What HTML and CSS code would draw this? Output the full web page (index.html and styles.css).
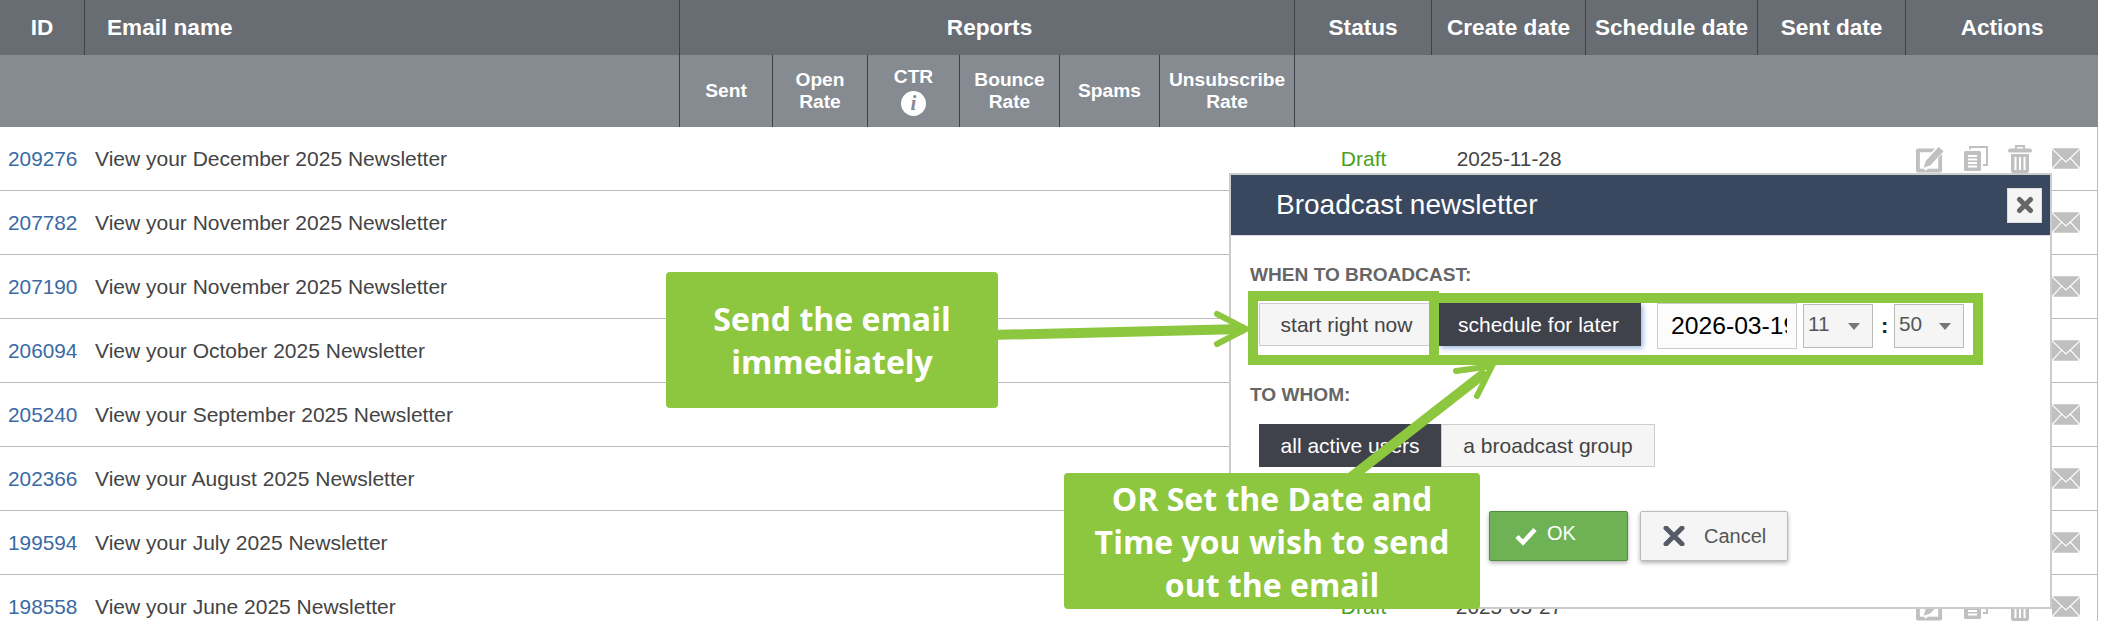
FILE: index.html
```html
<!DOCTYPE html>
<html lang="en">
<head>
<meta charset="utf-8">
<title>Newsletters</title>
<link rel="stylesheet" href="styles.css">
</head>
<body>
<svg class="defs" width="0" height="0" aria-hidden="true">
  <symbol id="i-edit" viewBox="0 0 29 28">
    <rect x="0" y="3" width="27" height="25" rx="2" fill="#c0c0c0"/>
    <rect x="4" y="7" width="19" height="17" fill="#fff"/>
    <path d="M7 23 L26 3" stroke="#fff" stroke-width="9"/>
    <path d="M10 16 L23.5 1.5 L28.5 6 L15 20.5 L8 23 Z" fill="#c0c0c0"/>
  </symbol>
  <symbol id="i-copy" viewBox="0 0 24 25">
    <path d="M6 3.5 V1 H23 V19 H19" fill="none" stroke="#c0c0c0" stroke-width="2"/>
    <rect x="0" y="5" width="17" height="20" rx="1.5" fill="#c0c0c0"/>
    <path d="M4 10 H13 M4 13.5 H13 M4 17 H13 M4 20.5 H13" stroke="#fff" stroke-width="1.8"/>
  </symbol>
  <symbol id="i-trash" viewBox="0 0 24 28">
    <path d="M8 4 V1 H16 V4" fill="none" stroke="#c0c0c0" stroke-width="2"/>
    <rect x="0" y="3.5" width="24" height="4" rx="2" fill="#c0c0c0"/>
    <path d="M3 9 H21 V26 Q21 28 19 28 H5 Q3 28 3 26 Z" fill="#c0c0c0"/>
    <path d="M7.5 12 V25 M12 12 V25 M16.5 12 V25" stroke="#fff" stroke-width="2"/>
  </symbol>
  <symbol id="i-mail" viewBox="0 0 29 21">
    <rect width="29" height="21" rx="2.5" fill="#c0c0c0"/>
    <path d="M0.5 1 L14.5 14 L28.5 1 M0.5 20.5 L10 10 M28.5 20.5 L19 10" fill="none" stroke="#fff" stroke-width="1.2"/>
  </symbol>
</svg>

<div class="page">
  <table class="list">
    <colgroup>
      <col class="c-id"><col class="c-name"><col class="c-sent"><col class="c-open"><col class="c-ctr"><col class="c-bounce"><col class="c-spams"><col class="c-unsub"><col class="c-status"><col class="c-create"><col class="c-sched"><col class="c-sentd"><col class="c-actions">
    </colgroup>
    <thead>
      <tr class="head-main">
        <th>ID</th>
        <th class="left">Email name</th>
        <th colspan="6" class="reports">Reports</th>
        <th>Status</th>
        <th>Create date</th>
        <th>Schedule date</th>
        <th>Sent date</th>
        <th class="last">Actions</th>
      </tr>
      <tr class="head-sub">
        <th colspan="2"></th>
        <th>Sent</th>
        <th>Open<br>Rate</th>
        <th>CTR<br><span class="info">i</span></th>
        <th>Bounce<br>Rate</th>
        <th>Spams</th>
        <th>Unsubscribe<br>Rate</th>
        <th colspan="5" class="last"></th>
      </tr>
    </thead>
    <tbody>
      <tr>
        <td class="id"><a href="#">209276</a></td><td colspan="7">View your December 2025 Newsletter</td>
        <td class="status">Draft</td><td class="date">2025-11-28</td><td></td><td></td>
        <td class="actions"><div class="icons"><svg class="ic-edit"><use href="#i-edit"/></svg><svg class="ic-copy"><use href="#i-copy"/></svg><svg class="ic-trash"><use href="#i-trash"/></svg><svg class="ic-mail"><use href="#i-mail"/></svg></div></td>
      </tr>
      <tr>
        <td class="id"><a href="#">207782</a></td><td colspan="7">View your November 2025 Newsletter</td>
        <td></td><td></td><td></td><td></td>
        <td class="actions"><div class="icons"><svg class="ic-edit"><use href="#i-edit"/></svg><svg class="ic-copy"><use href="#i-copy"/></svg><svg class="ic-trash"><use href="#i-trash"/></svg><svg class="ic-mail"><use href="#i-mail"/></svg></div></td>
      </tr>
      <tr>
        <td class="id"><a href="#">207190</a></td><td colspan="7">View your November 2025 Newsletter</td>
        <td></td><td></td><td></td><td></td>
        <td class="actions"><div class="icons"><svg class="ic-edit"><use href="#i-edit"/></svg><svg class="ic-copy"><use href="#i-copy"/></svg><svg class="ic-trash"><use href="#i-trash"/></svg><svg class="ic-mail"><use href="#i-mail"/></svg></div></td>
      </tr>
      <tr>
        <td class="id"><a href="#">206094</a></td><td colspan="7">View your October 2025 Newsletter</td>
        <td></td><td></td><td></td><td></td>
        <td class="actions"><div class="icons"><svg class="ic-edit"><use href="#i-edit"/></svg><svg class="ic-copy"><use href="#i-copy"/></svg><svg class="ic-trash"><use href="#i-trash"/></svg><svg class="ic-mail"><use href="#i-mail"/></svg></div></td>
      </tr>
      <tr>
        <td class="id"><a href="#">205240</a></td><td colspan="7">View your September 2025 Newsletter</td>
        <td></td><td></td><td></td><td></td>
        <td class="actions"><div class="icons"><svg class="ic-edit"><use href="#i-edit"/></svg><svg class="ic-copy"><use href="#i-copy"/></svg><svg class="ic-trash"><use href="#i-trash"/></svg><svg class="ic-mail"><use href="#i-mail"/></svg></div></td>
      </tr>
      <tr>
        <td class="id"><a href="#">202366</a></td><td colspan="7">View your August 2025 Newsletter</td>
        <td></td><td></td><td></td><td></td>
        <td class="actions"><div class="icons"><svg class="ic-edit"><use href="#i-edit"/></svg><svg class="ic-copy"><use href="#i-copy"/></svg><svg class="ic-trash"><use href="#i-trash"/></svg><svg class="ic-mail"><use href="#i-mail"/></svg></div></td>
      </tr>
      <tr>
        <td class="id"><a href="#">199594</a></td><td colspan="7">View your July 2025 Newsletter</td>
        <td></td><td></td><td></td><td></td>
        <td class="actions"><div class="icons"><svg class="ic-edit"><use href="#i-edit"/></svg><svg class="ic-copy"><use href="#i-copy"/></svg><svg class="ic-trash"><use href="#i-trash"/></svg><svg class="ic-mail"><use href="#i-mail"/></svg></div></td>
      </tr>
      <tr>
        <td class="id"><a href="#">198558</a></td><td colspan="7">View your June 2025 Newsletter</td>
        <td class="status">Draft</td><td class="date">2025-05-27</td><td></td><td></td>
        <td class="actions"><div class="icons"><svg class="ic-edit"><use href="#i-edit"/></svg><svg class="ic-copy"><use href="#i-copy"/></svg><svg class="ic-trash"><use href="#i-trash"/></svg><svg class="ic-mail"><use href="#i-mail"/></svg></div></td>
      </tr>
    </tbody>
  </table>

  <section class="modal">
    <header class="modal-head">
      <h2 class="modal-title">Broadcast newsletter</h2>
      <button class="close" type="button" aria-label="Close">
        <svg width="20" height="20" viewBox="0 0 20 20"><path d="M4.5 4.5 L15.5 15.5 M15.5 4.5 L4.5 15.5" stroke="#666" stroke-width="5" stroke-linecap="round"/></svg>
      </button>
    </header>
    <div class="modal-body">
      <div class="label">WHEN TO BROADCAST:</div>
      <div class="when-row">
        <button class="seg seg-start" type="button">start right now</button>
        <button class="seg seg-later" type="button">schedule for later</button>
        <input class="date-input" type="text" value="2026-03-19">
        <div class="sel"><span>11</span></div>
        <span class="colon">:</span>
        <div class="sel"><span>50</span></div>
      </div>
      <div class="label label-who">TO WHOM:</div>
      <div class="who-row">
        <button class="seg seg-all" type="button">all active users</button>
        <button class="seg seg-group" type="button">a broadcast group</button>
      </div>
      <div class="action-row">
        <button class="btn btn-ok" type="button">
          <svg width="24" height="20" viewBox="0 0 24 20"><path d="M3 10.5 L9 16.5 L21 3.5" fill="none" stroke="#fff" stroke-width="4.5"/></svg>
          <span>OK</span>
        </button>
        <button class="btn btn-cancel" type="button">
          <svg width="22" height="20" viewBox="0 0 22 20"><path d="M3 2 L19 18 M19 2 L3 18" stroke="#555b66" stroke-width="5" stroke-linecap="round"/></svg>
          <span>Cancel</span>
        </button>
      </div>
    </div>
  </section>

  <div class="mark mark-later"></div>
  <div class="mark mark-now"></div>

  <svg class="arrows" width="2104" height="621" viewBox="0 0 2104 621" aria-hidden="true">
    <path class="shaft" d="M990 335 L1244 329"/>
    <path class="barb" d="M1217 314 L1246 329 L1217 344"/>
    <path class="shaft" d="M1350 478 L1486 372"/>
    <path class="barb" d="M1456 371 L1492 366 L1477 396"/>
  </svg>

  <div class="callout callout-now">Send the email<br>immediately</div>
  <div class="callout callout-later">OR Set the Date and<br>Time you wish to send<br>out the email</div>
</div>
</body>
</html>
```
FILE: styles.css
```css
* { box-sizing: border-box; }
html, body { margin: 0; height: 621px; overflow: hidden; background: #fff; }
body { font-family: "Liberation Sans", Arial, sans-serif; color: #444; }
.defs { position: absolute; }
.page { position: relative; width: 2104px; height: 621px; overflow: hidden; }

/* table */
.list { width: 2098px; table-layout: fixed; border-collapse: separate; border-spacing: 0; font-size: 21px; }
.c-id { width: 85px; } .c-name { width: 595px; } .c-sent { width: 93px; } .c-open { width: 95px; }
.c-ctr { width: 92px; } .c-bounce { width: 100px; } .c-spams { width: 100px; } .c-unsub { width: 135px; }
.c-status { width: 137px; } .c-create { width: 154px; } .c-sched { width: 172px; } .c-sentd { width: 148px; }
.c-actions { width: 192px; }

.list th { color: #fff; font-weight: 700; text-align: center; border-right: 1px solid #3e4148; padding: 0; }
.list th.last { border-right: 0; }
.head-main th { height: 55px; background: #686c73; font-size: 22.6px; }
.head-main th.left { text-align: left; padding-left: 22px; }
.head-main th.reports { padding-left: 5px; }
.head-sub th { height: 72px; background: #868a91; font-size: 19.2px; line-height: 22px; }
.info { display: inline-block; width: 25px; height: 25px; margin-top: 3px; border-radius: 50%; background: #fff; color: #868a91; font: italic 700 21px/25px "Liberation Serif", serif; vertical-align: top; }

.list td { height: 64px; padding: 0; border-bottom: 1px solid #bbb; vertical-align: middle; }
.list td:last-child { border-right: 1px solid #bbb; }
.list td + td { padding-left: 10px; }
.list td.id { padding-left: 8px; font-size: 20.8px; }
.id a { color: #3a6aa3; text-decoration: none; }
.list td.status { color: #4d9f1e; text-align: center; padding-left: 0; }
.list td.date { text-align: center; padding-left: 0; font-size: 20.8px; }
.list td.actions { padding-left: 10px; }
.icons { display: flex; align-items: center; gap: 20px; }
.ic-edit { width: 28px; height: 28px; }
.ic-copy { width: 24px; height: 25px; }
.ic-trash { width: 24px; height: 28px; }
.ic-mail { width: 28px; height: 21px; }

/* modal */
.modal { position: absolute; left: 1229px; top: 173px; width: 823px; height: 436px; background: #fff; border: 2px solid #ccc; z-index: 2; }
.modal-head { height: 61px; background: #39485f; border-bottom: 1px solid #dde; display: flex; align-items: center; justify-content: space-between; padding: 0 8px 0 45px; }
.modal-title { margin: 0; color: #fff; font-size: 28px; font-weight: 400; }
.close { width: 35px; height: 35px; background: #f5f5f5; border: 1px solid #ddd; padding: 0; display: flex; align-items: center; justify-content: center; }
.modal-body { padding: 28px 0 0 19px; }
.label { font-size: 19.1px; font-weight: 700; color: #666; line-height: 22px; }
.when-row { display: flex; align-items: flex-start; margin: 17px 0 0 9px; }
.seg { font: 21px "Liberation Sans", Arial, sans-serif; height: 43px; padding: 0; border: 1px solid #ccc; background: #f5f5f5; color: #444; }
.seg-start { width: 175px; margin-right: 5px; }
.seg-later { width: 202px; padding-right: 3px; background: #3f414b; border-color: #3f414b; color: #fff; box-shadow: 2px 2px 5px rgba(70, 120, 200, .55); }
.date-input { width: 140px; height: 46px; margin-left: 16px; padding: 0 9px 0 13px; border: 1px solid #ccc; background: #fcfcfc; color: #000; font: 24.7px "Liberation Sans", Arial, sans-serif; }
.sel { position: relative; width: 70px; height: 44px; margin: 1px 0 0 6px; padding-left: 4px; border: 1px solid #bbb; background: #f5f5f5; color: #555; font-size: 20.8px; line-height: 38px; }
.sel::after { content: ""; position: absolute; right: 12px; top: 18px; border-style: solid; border-color: #777 transparent transparent; border-width: 7px 6.5px 0; }
.sel + .colon + .sel { margin-left: 0; }
.colon { width: 21px; margin-top: 5px; padding-left: 8px; color: #222; font-size: 22px; font-weight: 700; line-height: 36px; }
.label-who { margin-top: 35px; }
.who-row { display: flex; margin: 18px 0 0 9px; }
.seg-all { width: 182px; background: #3f414b; border-color: #3f414b; color: #fff; }
.seg-group { width: 214px; }
.action-row { display: flex; gap: 12px; margin: 44px 0 0 239px; }
.btn { height: 50px; display: flex; align-items: center; padding: 0; font: 20px "Liberation Sans", Arial, sans-serif; border-radius: 2px; box-shadow: 0 2px 4px rgba(0, 0, 0, .3); }
.btn-ok { width: 139px; padding-left: 24px; gap: 9px; background: #6eb255; border: 1px solid #4f8f3b; color: #fff; }
.btn-ok span { position: relative; top: -3px; }
.btn-cancel { width: 148px; padding-left: 22px; gap: 19px; background: #f5f5f5; border: 1px solid #bbb; color: #555; }

/* annotations */
.mark { position: absolute; border: 10px solid #8dc63f; z-index: 3; }
.mark-now { left: 1248px; top: 291px; width: 191px; height: 74px; }
.mark-later { left: 1438px; top: 293px; width: 545px; height: 72px; border-left: 0; }
.arrows { position: absolute; left: 0; top: 0; z-index: 3; pointer-events: none; }
.shaft { stroke: #8dc63f; stroke-width: 10; fill: none; }
.barb { stroke: #8dc63f; stroke-width: 6; fill: none; stroke-linecap: round; stroke-linejoin: miter; }
.callout { position: absolute; z-index: 4; display: flex; align-items: center; justify-content: center; text-align: center; background: #8dc63f; border-radius: 4px; color: #fff; font: 700 32px/43px "Open Sans", sans-serif; }
.callout-now { left: 666px; top: 272px; width: 332px; height: 136px; }
.callout-later { left: 1064px; top: 473px; width: 416px; height: 136px; }
```
